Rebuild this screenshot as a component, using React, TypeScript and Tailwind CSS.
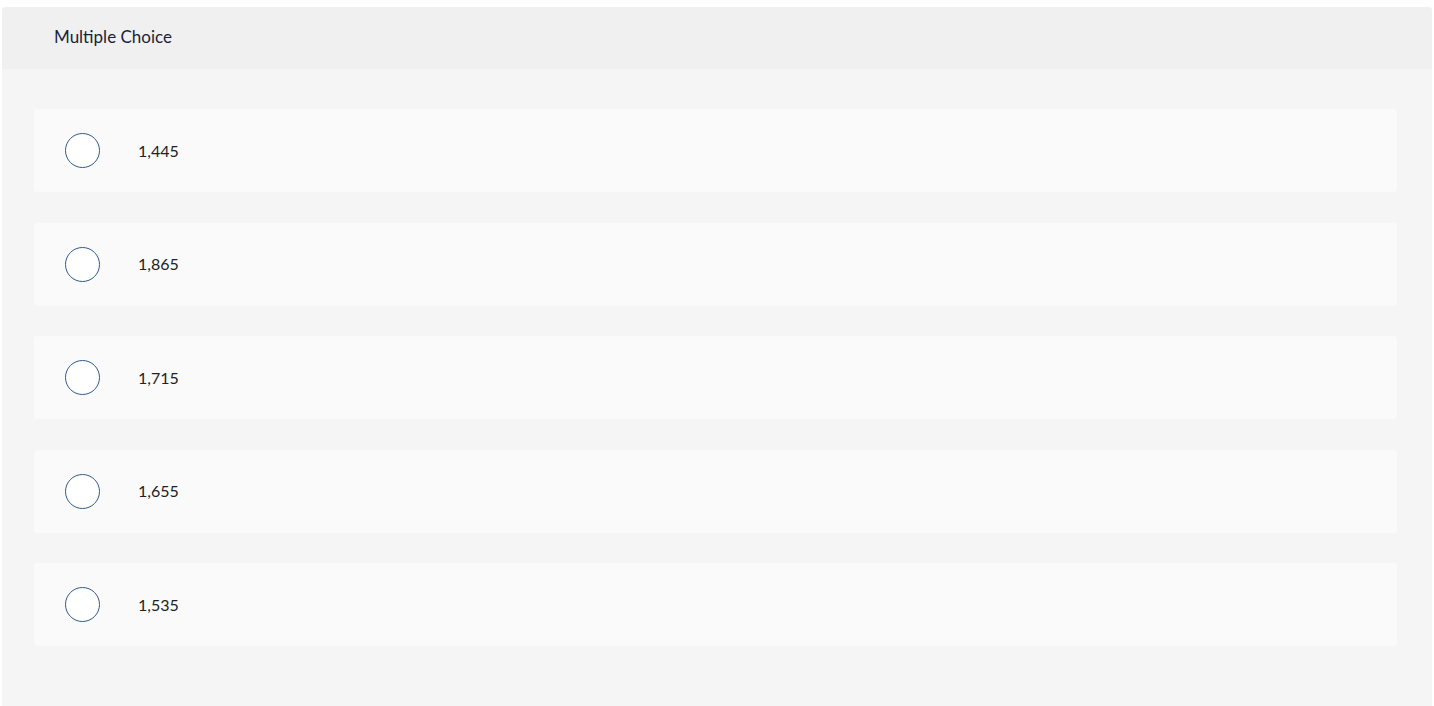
const choices = ["1,445", "1,865", "1,715", "1,655", "1,535"];

export default function App() {
  return (
    <div className="min-h-screen bg-white px-[2px] pt-[7px] pb-px font-['Lato','Open_Sans',sans-serif]">
      <div className="overflow-hidden rounded-t-[4px] bg-[#f5f5f5]">
        <div className="flex h-[62px] items-center bg-[#f0f0f0] pb-[2px] pl-[52px]">
          <span className="text-[17px] text-[#1b1f3b]">Multiple Choice</span>
        </div>

        <div className="flex flex-col gap-[30.5px] pt-10 pb-[60px] pl-8 pr-[35px]">
          {choices.map((choice) => (
            <label
              key={choice}
              className="flex h-[83px] items-center rounded-[4px] bg-[#fafafa] pl-[31px]"
            >
              <span className="h-[35px] w-[35px] shrink-0 rounded-full border-[1.5px] border-[#2f5b8c] bg-white" />
              <span className="ml-[38px] text-[16px] text-[#222222]">
                {choice}
              </span>
            </label>
          ))}
        </div>
      </div>
    </div>
  );
}
